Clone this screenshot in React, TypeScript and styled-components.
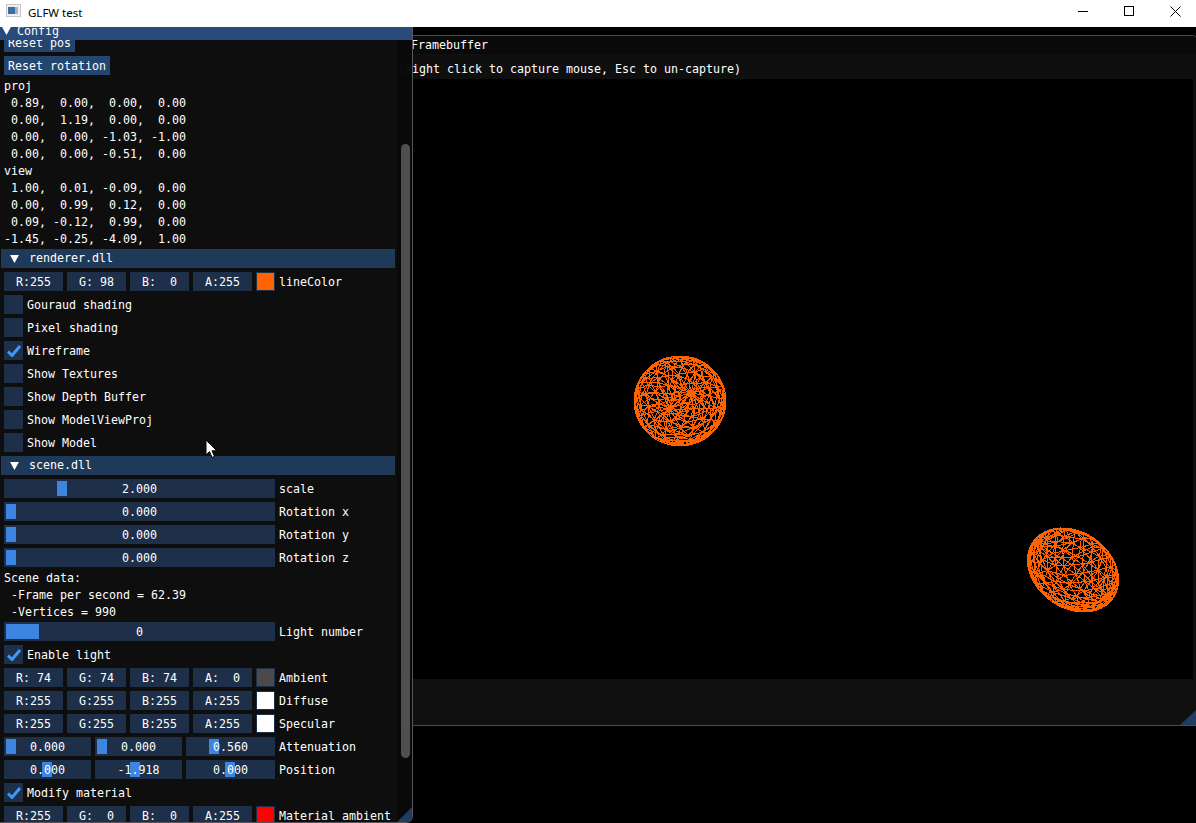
import { useMemo } from 'react'
import styled, { createGlobalStyle } from 'styled-components'

const GlobalStyle = createGlobalStyle`
  html, body {
    margin: 0;
    padding: 0;
    height: 100%;
    overflow: hidden;
    background: #000;
  }
`

const Page = styled.div`
  display: flex;
  flex-direction: column;
  width: 1196px;
  height: 823px;
  overflow: hidden;
  font-family: 'DejaVu Sans Mono', 'Liberation Mono', monospace;
  font-size: 11.63px;
  line-height: 13px;
  color: #fff;
`

const TitleBar = styled.div`
  display: flex;
  align-items: center;
  flex: 0 0 27px;
  box-sizing: border-box;
  background: #fff;
  color: #000;
  padding: 0 0 3px 6px;
  font-family: 'Noto Sans', 'Open Sans', sans-serif;
  font-size: 11.5px;

  > svg {
    margin-top: -3px;
  }

  > span {
    margin-left: 7px;
    flex: 1;
  }

  > .win-buttons {
    display: flex;
    margin: -2px -2px 0 0;
  }
`

const WinButton = styled.div`
  width: 46px;
  height: 24px;
  display: flex;
  align-items: center;
  justify-content: center;
`

const Desktop = styled.div`
  position: relative;
  flex: 1;
  background: #000;
  overflow: hidden;
`

const FramebufferWindow = styled.div`
  position: absolute;
  left: 390px;
  top: 8px;
  width: 810px;
  height: 691px;
  box-sizing: border-box;
  display: flex;
  flex-direction: column;
  background: #0f0f0f;
  border-top: 1px solid #4a4a52;
  border-bottom: 1px solid #4a4a52;
  border-radius: 0 9px 0 0;
  overflow: hidden;

  > .title {
    flex: 0 0 18px;
    display: flex;
    align-items: center;
    padding-left: 21px;
    background: #0a0a0a;
    white-space: pre;
  }

  > .hint {
    flex: 0 0 25px;
    box-sizing: border-box;
    display: flex;
    align-items: center;
    padding: 5px 0 0 8px;
    white-space: pre;
  }

  > .footer {
    flex: 1;
    background: #101010;
  }
`

const ViewPort = styled.div`
  flex: 0 0 600px;
  margin: 0 7px 0 8px;
  background: #000;
`

const FrameSvg = styled.svg`
  display: block;
  width: 100%;
  height: 100%;
`

const FrameGrip = styled.div`
  position: absolute;
  right: 4px;
  bottom: 0;
  width: 16px;
  height: 15px;
  background: #1f3d63;
  clip-path: polygon(100% 0, 100% 100%, 0 100%);
`

const ConfigWindow = styled.div`
  position: absolute;
  left: 0;
  top: 0;
  width: 413px;
  height: 796px;
  box-sizing: border-box;
  display: flex;
  flex-direction: column;
  background: rgba(15, 15, 15, 0.94);
  border-right: 1px solid #55555f;
  border-bottom: 1px solid #55555f;
  border-radius: 0 0 7px 0;
  overflow: hidden;
`

const ConfigTitle = styled.div`
  flex: 0 0 13px;
  display: flex;
  align-items: flex-start;
  gap: 6px;
  padding-left: 2px;
  background: #294a7a;
  overflow: hidden;

  > svg {
    flex-shrink: 0;
  }

  > span {
    margin-top: -2px;
  }
`

const ConfigBody = styled.div`
  flex: 1;
  display: flex;
  min-height: 0;
  overflow: hidden;
`

const Content = styled.div`
  flex: 0 0 395px;
  box-sizing: border-box;
  display: flex;
  flex-direction: column;
  gap: 4px;
  margin-top: -7px;
  padding-left: 4px;
  white-space: pre;

  > * {
    flex-shrink: 0;
  }
`

const ScrollTrack = styled.div`
  flex: 1;
  margin-left: 2px;
  padding: 104px 2px 0 4px;
  background: rgba(5, 5, 5, 0.53);
`

const ScrollThumb = styled.div`
  height: 614px;
  background: #4f4f4f;
  border-radius: 5px;
`

const ConfigGrip = styled.div`
  position: absolute;
  right: 0;
  bottom: 0;
  width: 15px;
  height: 15px;
  background: #1f3d63;
  clip-path: polygon(100% 0, 100% 100%, 0 100%);
`

const Button = styled.div`
  align-self: flex-start;
  height: 19px;
  line-height: 21px;
  padding: 0 4px;
  background: #23456e;
`

const TextLine = styled.div`
  height: 13px;
  line-height: 15px;
`

const Header = styled.div`
  display: flex;
  align-items: center;
  gap: 10px;
  height: 19px;
  margin-left: -3px;
  padding-left: 9px;
  background: #1f3958;

  > span {
    line-height: 15px;
  }
`

const Row = styled.div`
  display: flex;
  gap: 4px;
  height: 19px;
  line-height: 21px;
`

const ColorField = styled.div`
  flex: 0 0 59px;
  text-align: center;
  background: #1d2f49;
`

const Swatch = styled.div<{ $color: string }>`
  flex: 0 0 19px;
  box-sizing: border-box;
  border: 1px solid #1d2f49;
  background: ${p => p.$color};
`

const CheckBox = styled.div`
  flex: 0 0 19px;
  display: flex;
  align-items: center;
  justify-content: center;
  background: #1d2f49;
`

const Slider = styled.div<{ $width: number }>`
  position: relative;
  flex: 0 0 ${p => p.$width}px;
  text-align: center;
  background: #1d2f49;

  > span {
    position: relative;
  }
`

const Grab = styled.div<{ $left: number; $size: number }>`
  position: absolute;
  top: 2px;
  bottom: 2px;
  left: ${p => p.$left}px;
  width: ${p => p.$size}px;
  background: #3d85e0;
`

const Cursor = styled.svg`
  position: absolute;
  left: 205px;
  top: 412px;
`

const Triangle = ({ size }: { size: number }) => (
  <svg width={size} height={size - 1} viewBox="0 0 10 9">
    <path d="M0 0H10L5 9Z" fill="#fff" />
  </svg>
)

const Check = () => (
  <svg width="14" height="12" viewBox="0 0 14 12">
    <path d="M1 6.5L5 10.5L13 1" fill="none" stroke="#4296fa" strokeWidth="3" />
  </svg>
)

const Icon = () => (
  <svg width="15" height="13" viewBox="0 0 15 13">
    <rect width="15" height="13" fill="#c4c8cc" />
    <rect x="1" y="1" width="13" height="11" fill="#eef0f2" />
    <rect x="2" y="3" width="7" height="7" fill="#3a6ea5" />
    <rect x="9" y="3" width="3" height="7" fill="#a9b4bf" />
  </svg>
)

type V3 = [number, number, number]

// wireframe ball: a jittered lat/long mesh around a tilted pole, flattened and turned on screen
function wireframe(cx: number, cy: number, rx: number, ry: number, turn: number, pole: V3, seed: number) {
  const lat = 12
  const lon = 18
  let s = seed * 7919
  const rand = () => {
    s = (s * 16807) % 2147483647
    return s / 2147483647 - 0.5
  }
  const norm = (v: V3): V3 => {
    const l = Math.hypot(v[0], v[1], v[2])
    return [v[0] / l, v[1] / l, v[2] / l]
  }
  const cross = (a: V3, b: V3): V3 => [a[1] * b[2] - a[2] * b[1], a[2] * b[0] - a[0] * b[2], a[0] * b[1] - a[1] * b[0]]
  const P = norm(pole)
  const U = norm(cross(P, [0.3, 0.9, 0.1]))
  const W = cross(P, U)
  const pts: [number, number][][] = []
  for (let i = 0; i <= lat; i++) {
    const row: [number, number][] = []
    const th = (Math.PI * i) / lat
    for (let j = 0; j < lon; j++) {
      const ph = (2 * Math.PI * j) / lon
      const a = Math.sin(th) * Math.cos(ph)
      const b = Math.sin(th) * Math.sin(ph)
      const c = Math.cos(th)
      const jt = i === 0 || i === lat ? 0 : 0.05
      const x = a * U[0] + b * W[0] + c * P[0] + rand() * jt
      const y = a * U[1] + b * W[1] + c * P[1] + rand() * jt
      const len = Math.max(1, Math.hypot(x, y))
      const px = (x / len) * rx
      const py = (y / len) * ry
      row.push([
        cx + px * Math.cos(turn) - py * Math.sin(turn),
        cy + px * Math.sin(turn) + py * Math.cos(turn),
      ])
    }
    pts.push(row)
  }
  let d = ''
  const seg = (a: [number, number], b: [number, number]) => {
    d += `M${a[0].toFixed(1)} ${a[1].toFixed(1)}L${b[0].toFixed(1)} ${b[1].toFixed(1)}`
  }
  for (let i = 0; i < lat; i++) {
    for (let j = 0; j < lon; j++) {
      const n = (j + 1) % lon
      seg(pts[i][j], pts[i + 1][j])
      if (i > 0) seg(pts[i][j], pts[i][n])
      if (i > 0 && i < lat - 1) seg(pts[i][j], pts[i + 1][n])
    }
  }
  const rim: string[] = []
  for (let a = 0; a <= 48; a++) {
    const t = (a / 48) * Math.PI * 2
    const px = Math.cos(t) * rx
    const py = Math.sin(t) * ry
    rim.push(`${(cx + px * Math.cos(turn) - py * Math.sin(turn)).toFixed(1)} ${(cy + px * Math.sin(turn) + py * Math.cos(turn)).toFixed(1)}`)
  }
  return d + 'M' + rim.join('L')
}

const ColorRow = ({ values, color, label }: { values: string[]; color: string; label: string }) => (
  <Row>
    {values.map(v => (
      <ColorField key={v}>{v}</ColorField>
    ))}
    <Swatch $color={color} />
    <span>{label}</span>
  </Row>
)

const CheckRow = ({ label, on }: { label: string; on?: boolean }) => (
  <Row>
    <CheckBox>{on && <Check />}</CheckBox>
    <span>{label}</span>
  </Row>
)

const SliderField = ({ width, left, size = 10, value }: { width: number; left: number; size?: number; value: string }) => (
  <Slider $width={width}>
    <Grab $left={left} $size={size} />
    <span>{value}</span>
  </Slider>
)

const proj = [
  ' 0.89,  0.00,  0.00,  0.00',
  ' 0.00,  1.19,  0.00,  0.00',
  ' 0.00,  0.00, -1.03, -1.00',
  ' 0.00,  0.00, -0.51,  0.00',
]

const view = [
  ' 1.00,  0.01, -0.09,  0.00',
  ' 0.00,  0.99,  0.12,  0.00',
  ' 0.09, -0.12,  0.99,  0.00',
  '-1.45, -0.25, -4.09,  1.00',
]

const rgba = (r: string, g: string, b: string, a: string) => [`R:${r}`, `G:${g}`, `B:${b}`, `A:${a}`]

export default function App() {
  // coordinates inside the viewport, which starts at 398,79
  const balls = useMemo(
    () =>
      wireframe(282, 322, 46, 45, 0, [0.24, -0.17, 0.955], 3) +
      wireframe(675, 491, 49, 38, 0.62, [0.9, 0.05, 0.43], 5),
    []
  )

  return (
    <Page>
      <GlobalStyle />
      <TitleBar>
        <Icon />
        <span>GLFW test</span>
        <div className="win-buttons">
          <WinButton>
            <svg width="10" height="10" viewBox="0 0 10 10">
              <path d="M0 5.5H10" stroke="#000" />
            </svg>
          </WinButton>
          <WinButton>
            <svg width="10" height="10" viewBox="0 0 10 10">
              <rect x="0.5" y="0.5" width="9" height="9" fill="none" stroke="#000" />
            </svg>
          </WinButton>
          <WinButton>
            <svg width="11" height="11" viewBox="0 0 11 11">
              <path d="M0.5 0.5L10.5 10.5M10.5 0.5L0.5 10.5" stroke="#000" />
            </svg>
          </WinButton>
        </div>
      </TitleBar>
      <Desktop>
        <FramebufferWindow>
          <div className="title">Framebuffer</div>
          <div className="hint">(Right click to capture mouse, Esc to un-capture)</div>
          <ViewPort>
            <FrameSvg viewBox="0 0 795 600">
              <path d={balls} fill="none" stroke="#ff6200" strokeWidth="1" shapeRendering="crispEdges" />
            </FrameSvg>
          </ViewPort>
          <div className="footer" />
          <FrameGrip />
        </FramebufferWindow>
        <ConfigWindow>
          <ConfigTitle>
            <Triangle size={9} />
            <span>Config</span>
          </ConfigTitle>
          <ConfigBody>
            <Content>
              <Button>Reset pos</Button>
              <Button>Reset rotation</Button>
              <TextLine>proj</TextLine>
              {proj.map(l => (
                <TextLine key={l}>{l}</TextLine>
              ))}
              <TextLine>view</TextLine>
              {view.map(l => (
                <TextLine key={l}>{l}</TextLine>
              ))}
              <Header>
                <Triangle size={9} />
                <span>renderer.dll</span>
              </Header>
              <ColorRow values={rgba('255', ' 98', '  0', '255')} color="#ff6200" label="lineColor" />
              <CheckRow label="Gouraud shading" />
              <CheckRow label="Pixel shading" />
              <CheckRow label="Wireframe" on />
              <CheckRow label="Show Textures" />
              <CheckRow label="Show Depth Buffer" />
              <CheckRow label="Show ModelViewProj" />
              <CheckRow label="Show Model" />
              <Header>
                <Triangle size={9} />
                <span>scene.dll</span>
              </Header>
              <Row>
                <SliderField width={271} left={53} value="2.000" />
                <span>scale</span>
              </Row>
              <Row>
                <SliderField width={271} left={2} value="0.000" />
                <span>Rotation x</span>
              </Row>
              <Row>
                <SliderField width={271} left={2} value="0.000" />
                <span>Rotation y</span>
              </Row>
              <Row>
                <SliderField width={271} left={2} value="0.000" />
                <span>Rotation z</span>
              </Row>
              <TextLine>Scene data:</TextLine>
              <TextLine> -Frame per second = 62.39</TextLine>
              <TextLine> -Vertices = 990</TextLine>
              <Row>
                <SliderField width={271} left={2} size={33} value="0" />
                <span>Light number</span>
              </Row>
              <CheckRow label="Enable light" on />
              <ColorRow values={rgba(' 74', ' 74', ' 74', '  0')} color="#4a4a4a" label="Ambient" />
              <ColorRow values={rgba('255', '255', '255', '255')} color="#fff" label="Diffuse" />
              <ColorRow values={rgba('255', '255', '255', '255')} color="#fff" label="Specular" />
              <Row>
                <SliderField width={87} left={2} value="0.000" />
                <SliderField width={87} left={2} value="0.000" />
                <SliderField width={89} left={23} value="0.560" />
                <span>Attenuation</span>
              </Row>
              <Row>
                <SliderField width={87} left={38} value="0.000" />
                <SliderField width={87} left={35} value="-1.918" />
                <SliderField width={89} left={39} value="0.000" />
                <span>Position</span>
              </Row>
              <CheckRow label="Modify material" on />
              <ColorRow values={rgba('255', '  0', '  0', '255')} color="#ff0000" label="Material ambient" />
            </Content>
            <ScrollTrack>
              <ScrollThumb />
            </ScrollTrack>
          </ConfigBody>
          <ConfigGrip />
        </ConfigWindow>
        <Cursor width="13" height="20" viewBox="0 0 13 20">
          <path d="M1 1V16L4.5 12.6L7 18.5L9.5 17.4L7 11.8H11.8Z" fill="#fff" stroke="#000" />
        </Cursor>
      </Desktop>
    </Page>
  )
}
